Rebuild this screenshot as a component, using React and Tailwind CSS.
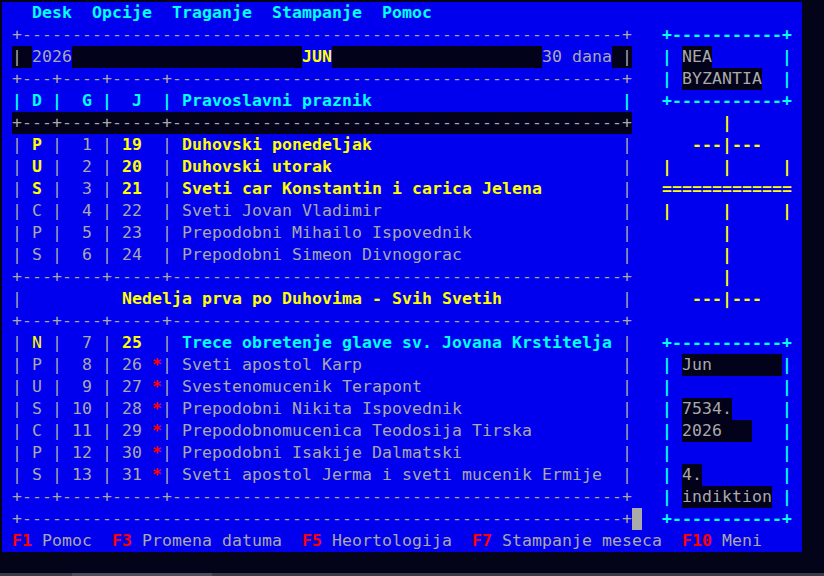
const W = 80;
const H = 25;

const FG = {
  g: 'text-[#aaaaaa]',
  c: 'text-[#00ffff] font-bold',
  y: 'text-[#ffff00] font-bold',
  Y: 'text-[#ffff00]',
  r: 'text-[#ff0000] font-bold',
};

const BG = {
  b: '',
  k: 'bg-[#02021a]',
  w: 'bg-[#aaaaaa]',
};

const pad = (s, n) => s + ' '.repeat(Math.max(0, n - s.length));

function buildScreen() {
  const rows = Array.from({ length: H }, () => ({
    ch: Array(W).fill(' '),
    fg: Array(W).fill('g'),
    bg: Array(W).fill('b'),
  }));

  const put = (r, c, text, fg = 'g', bg) => {
    for (let i = 0; i < text.length; i++) {
      rows[r].ch[c + i] = text[i];
      rows[r].fg[c + i] = fg;
      if (bg) rows[r].bg[c + i] = bg;
    }
  };
  const paint = (r, c, n, fg) => {
    for (let i = 0; i < n; i++) rows[r].fg[c + i] = fg;
  };
  const shade = (r, c, n, bg) => {
    for (let i = 0; i < n; i++) rows[r].bg[c + i] = bg;
  };

  // menu
  put(0, 3, 'Desk  Opcije  Traganje  Stampanje  Pomoc', 'c');

  const edge = '+' + '-'.repeat(60) + '+';
  const sep = '+---+----+-----+' + '-'.repeat(45) + '+';

  put(1, 1, edge);

  // year / month line
  put(2, 1, '|');
  shade(2, 1, 2, 'k');
  put(2, 3, '2026');
  shade(2, 7, 23, 'k');
  put(2, 30, 'JUN', 'y');
  shade(2, 33, 21, 'k');
  put(2, 54, '30 dana');
  shade(2, 61, 2, 'k');
  put(2, 62, '|');

  put(3, 1, sep);
  put(4, 1, pad('| D |  G |  J  | Pravoslavni praznik', 61) + '|', 'c');
  put(5, 1, sep);
  shade(5, 1, 62, 'k');

  const day = (r, d, g, j, name, kind, star) => {
    put(r, 1, pad(`| ${d} | ${String(g).padStart(2)} | ${j} ${star ? '*' : ' '}| ${name}`, 61) + '|');
    if (kind === 'hol') {
      paint(r, 3, 1, 'y');
      paint(r, 12, 2, 'y');
      paint(r, 18, name.length, 'y');
    }
    if (kind === 'sun') {
      paint(r, 3, 1, 'Y');
      paint(r, 12, 2, 'y');
      paint(r, 18, name.length, 'c');
    }
    if (star) paint(r, 15, 1, 'r');
  };

  day(6, 'P', 1, 19, 'Duhovski ponedeljak', 'hol');
  day(7, 'U', 2, 20, 'Duhovski utorak', 'hol');
  day(8, 'S', 3, 21, 'Sveti car Konstantin i carica Jelena', 'hol');
  day(9, 'C', 4, 22, 'Sveti Jovan Vladimir');
  day(10, 'P', 5, 23, 'Prepodobni Mihailo Ispovednik');
  day(11, 'S', 6, 24, 'Prepodobni Simeon Divnogorac');

  put(12, 1, sep);
  put(13, 1, '|');
  put(13, 12, 'Nedelja prva po Duhovima - Svih Svetih', 'y');
  put(13, 62, '|');
  put(14, 1, sep);

  day(15, 'N', 7, 25, 'Trece obretenje glave sv. Jovana Krstitelja', 'sun');
  day(16, 'P', 8, 26, 'Sveti apostol Karp', null, true);
  day(17, 'U', 9, 27, 'Svestenomucenik Terapont', null, true);
  day(18, 'S', 10, 28, 'Prepodobni Nikita Ispovednik', null, true);
  day(19, 'C', 11, 29, 'Prepodobnomucenica Teodosija Tirska', null, true);
  day(20, 'P', 12, 30, 'Prepodobni Isakije Dalmatski', null, true);
  day(21, 'S', 13, 31, 'Sveti apostol Jerma i sveti mucenik Ermije', null, true);

  put(22, 1, sep);
  put(23, 1, edge);
  shade(23, 63, 1, 'w');

  // right panel
  const box = '+-----------+';
  const side = '|           |';
  const P = 66;
  put(1, P, box, 'c');
  put(2, P, side, 'c');
  put(2, P + 2, 'NEA', 'g', 'k');
  put(3, P, side, 'c');
  put(3, P + 2, 'BYZANTIA', 'g', 'k');
  put(4, P, box, 'c');

  // cross
  put(5, P + 6, '|', 'y');
  put(6, P + 3, '---|---', 'y');
  put(7, P, '|', 'y');
  put(7, P + 6, '|', 'y');
  put(7, P + 12, '|', 'y');
  put(8, P, '=============', 'y');
  put(9, P, '|', 'y');
  put(9, P + 6, '|', 'y');
  put(9, P + 12, '|', 'y');
  put(10, P + 6, '|', 'y');
  put(11, P + 6, '|', 'y');
  put(12, P + 6, '|', 'y');
  put(13, P + 3, '---|---', 'y');

  put(15, P, box, 'c');
  for (let r = 16; r <= 22; r++) put(r, P, side, 'c');
  put(16, P + 2, 'Jun       ', 'g', 'k');
  put(18, P + 2, '7534.', 'g', 'k');
  put(19, P + 2, '2026   ', 'g', 'k');
  put(21, P + 2, '4.', 'g', 'k');
  put(22, P + 2, 'indiktion', 'g', 'k');
  put(23, P, box, 'c');

  // function keys
  put(24, 1, 'F1', 'r');
  put(24, 4, 'Pomoc');
  put(24, 11, 'F3', 'r');
  put(24, 14, 'Promena datuma');
  put(24, 30, 'F5', 'r');
  put(24, 33, 'Heortologija');
  put(24, 47, 'F7', 'r');
  put(24, 50, 'Stampanje meseca');
  put(24, 68, 'F10', 'r');
  put(24, 72, 'Meni');

  return rows;
}

function Row({ row }) {
  return (
    <div className="flex h-[22px]">
      {row.ch.map((c, i) => (
        <span key={i} className={`inline-block w-[10px] shrink-0 whitespace-pre ${FG[row.fg[i]]} ${BG[row.bg[i]]}`}>
          {c}
        </span>
      ))}
    </div>
  );
}

export default function App() {
  const rows = buildScreen();

  return (
    <div className="flex h-[576px] w-[824px] flex-col overflow-hidden bg-[#03031a] pl-[2px] pt-[2px]">
      <div
        className="h-[550px] w-[800px] bg-[#0000ee] text-[16.5px] leading-[22px]"
        style={{ fontFamily: '"DejaVu Sans Mono", "Liberation Mono", monospace' }}
      >
        {rows.map((row, r) => (
          <Row key={r} row={row} />
        ))}
      </div>
      <div className="flex-1" />
      <div className="-ml-[2px] flex h-[3px] w-[824px] bg-[#393c46]">
        <div className="ml-[72px] w-[140px] bg-[#4b4f5b]" />
      </div>
    </div>
  );
}
